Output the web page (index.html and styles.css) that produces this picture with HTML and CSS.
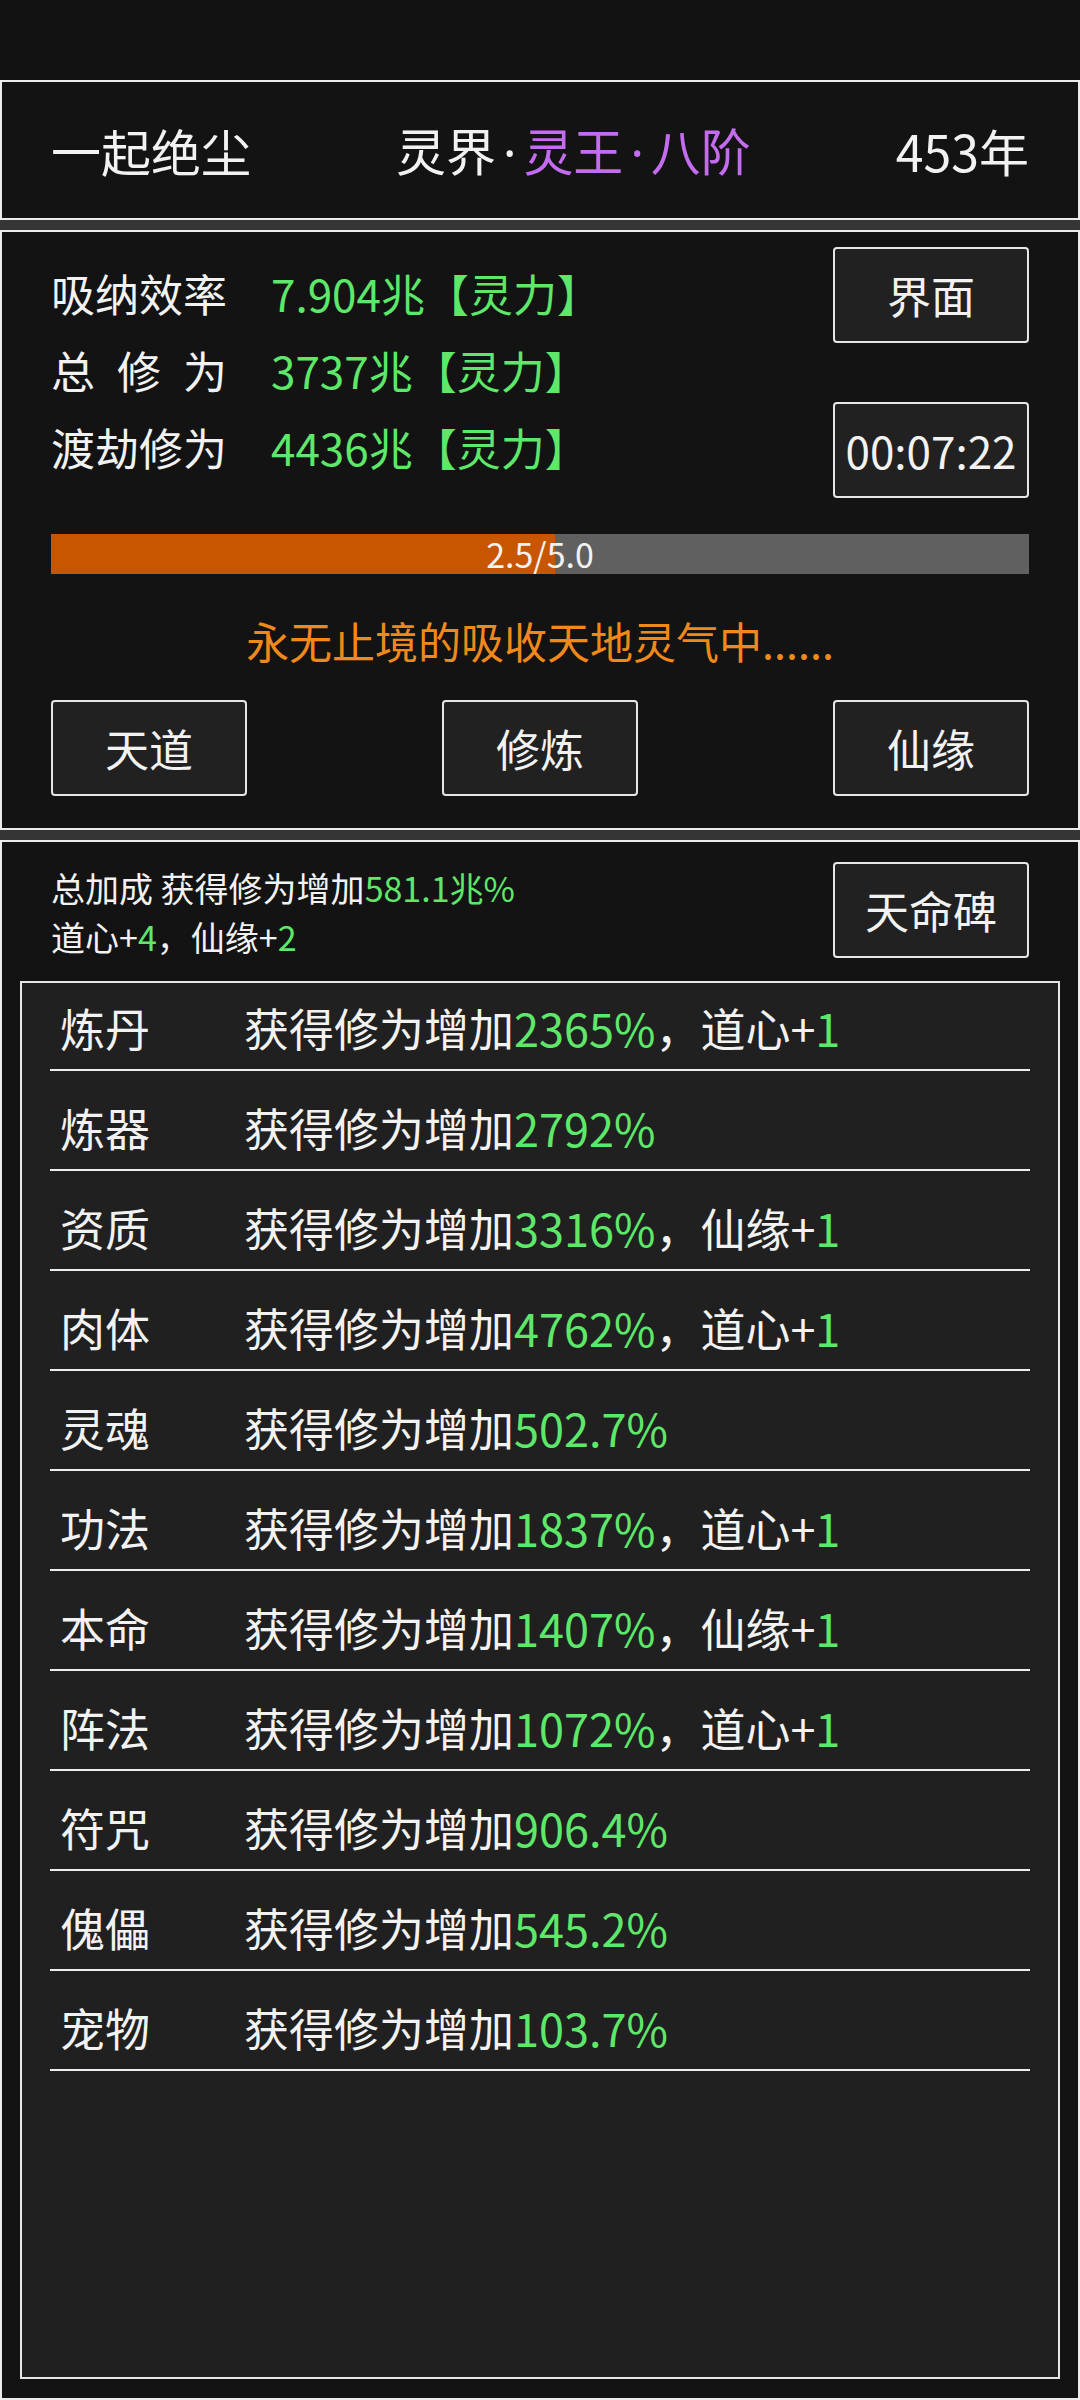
FILE: index.html
```html
<!DOCTYPE html>
<html lang="zh-CN">
<head>
<meta charset="utf-8">
<title>修仙</title>
<link rel="stylesheet" href="styles.css">
</head>
<body>
<div class="status"></div>

<section class="panel header">
  <div class="name">一起绝尘</div>
  <div class="realm">灵界<span class="dot">·</span><span class="purple">灵王<span class="dot">·</span>八阶</span></div>
  <div class="years">453年</div>
</section>

<section class="panel cultivate">
  <div class="info">
    <div class="stats">
      <div class="stat"><div class="stat-label">吸纳效率</div><div class="green">7.904兆【灵力】</div></div>
      <div class="stat"><div class="stat-label">总修为</div><div class="green">3737兆【灵力】</div></div>
      <div class="stat"><div class="stat-label">渡劫修为</div><div class="green">4436兆【灵力】</div></div>
    </div>
    <div class="side">
      <div class="btn">界面</div>
      <div class="btn">00:07:22</div>
    </div>
  </div>
  <div class="bar">
    <div class="bar-fill" style="width:51.5%"></div>
    <div class="bar-text">2.5/5.0</div>
  </div>
  <div class="hint">永无止境的吸收天地灵气中......</div>
  <div class="actions">
    <div class="btn">天道</div>
    <div class="btn">修炼</div>
    <div class="btn">仙缘</div>
  </div>
</section>

<section class="panel bonus-panel">
  <div class="bonus-top">
    <div class="bonus-text">
      <div>总加成 获得修为增加<span class="green">581.1兆%</span></div>
      <div>道心+<span class="green">4</span>，仙缘+<span class="green">2</span></div>
    </div>
    <div class="btn">天命碑</div>
  </div>
  <div class="list">
    <div class="row"><div class="row-label">炼丹</div><div>获得修为增加<span class="green">2365%</span>，道心+<span class="green">1</span></div></div>
    <div class="row"><div class="row-label">炼器</div><div>获得修为增加<span class="green">2792%</span></div></div>
    <div class="row"><div class="row-label">资质</div><div>获得修为增加<span class="green">3316%</span>，仙缘+<span class="green">1</span></div></div>
    <div class="row"><div class="row-label">肉体</div><div>获得修为增加<span class="green">4762%</span>，道心+<span class="green">1</span></div></div>
    <div class="row"><div class="row-label">灵魂</div><div>获得修为增加<span class="green">502.7%</span></div></div>
    <div class="row"><div class="row-label">功法</div><div>获得修为增加<span class="green">1837%</span>，道心+<span class="green">1</span></div></div>
    <div class="row"><div class="row-label">本命</div><div>获得修为增加<span class="green">1407%</span>，仙缘+<span class="green">1</span></div></div>
    <div class="row"><div class="row-label">阵法</div><div>获得修为增加<span class="green">1072%</span>，道心+<span class="green">1</span></div></div>
    <div class="row"><div class="row-label">符咒</div><div>获得修为增加<span class="green">906.4%</span></div></div>
    <div class="row"><div class="row-label">傀儡</div><div>获得修为增加<span class="green">545.2%</span></div></div>
    <div class="row"><div class="row-label">宠物</div><div>获得修为增加<span class="green">103.7%</span></div></div>
  </div>
</section>
</body>
</html>
```

FILE: styles.css
```css
* {
  box-sizing: border-box;
  margin: 0;
  padding: 0;
}

html {
  background: #353535;
}

body {
  margin: 0;
  width: 1080px;
  height: 2400px;
  display: flex;
  flex-direction: column;
  background: #353535;
  color: #f2f2f2;
  font-family: "Noto Sans CJK SC", "Noto Sans", sans-serif;
  overflow: hidden;
}

.status {
  height: 80px;
  flex: none;
  background: #121212;
}

.panel {
  flex: none;
  background: #131313;
  border: 2px solid #ececec;
}

.panel + .panel {
  margin-top: 10px;
}

.green {
  color: #5ee86a;
}

.purple {
  color: #c46cf0;
}

/* header */
.header {
  height: 140px;
  padding: 0 49px;
  display: flex;
  align-items: center;
  justify-content: space-between;
  font-size: 50px;
  line-height: 1;
  white-space: nowrap;
}

.dot {
  font-family: "Noto Sans", "DejaVu Sans", sans-serif;
  margin: 0 7px;
}

/* cultivation panel */
.cultivate {
  height: 600px;
  padding: 13px 49px 30px;
  display: flex;
  flex-direction: column;
}

.info {
  height: 251px;
  display: flex;
  align-items: center;
  justify-content: space-between;
}

.stats {
  display: flex;
  flex-direction: column;
  margin-top: -2px;
}

.stat {
  height: 77px;
  display: flex;
  align-items: center;
  font-size: 44px;
  white-space: nowrap;
}

.stat-label {
  width: 176px;
  margin-right: 44px;
  text-align: justify;
  text-align-last: justify;
}

.side {
  height: 251px;
  margin-top: 4px;
  display: flex;
  flex-direction: column;
  justify-content: space-between;
}

.btn {
  flex: none;
  width: 196px;
  height: 96px;
  border: 2px solid #e6e6e6;
  border-radius: 4px;
  background: #212121;
  display: flex;
  align-items: center;
  justify-content: center;
  font-size: 44px;
  white-space: nowrap;
}

.bar {
  position: relative;
  margin-top: 38px;
  height: 40px;
  background: #606060;
  flex: none;
}

.bar-fill {
  height: 100%;
  background: #c85500;
}

.bar-text {
  position: absolute;
  inset: 0;
  display: flex;
  align-items: center;
  justify-content: center;
  font-size: 34px;
  line-height: 1;
}

.hint {
  margin-top: 36px;
  height: 60px;
  line-height: 60px;
  text-align: center;
  color: #f0891a;
  font-size: 43px;
  white-space: nowrap;
}

.actions {
  margin-top: 30px;
  display: flex;
  justify-content: space-between;
}

/* bonus panel */
.bonus-panel {
  flex: 1;
  padding: 20px 18px 19px;
  display: flex;
  flex-direction: column;
}

.bonus-top {
  height: 96px;
  padding: 0 31px;
  display: flex;
  align-items: flex-start;
  justify-content: space-between;
}

.bonus-text {
  padding-top: 1px;
  font-size: 34px;
  line-height: 49px;
  white-space: nowrap;
}

.list {
  flex: 1;
  margin-top: 23px;
  padding: 0 28px;
  background: #202020;
  border: 2px solid #e6e6e6;
  display: flex;
  flex-direction: column;
  gap: 12px;
}

.row {
  flex: none;
  height: 88px;
  padding-top: 2px;
  border-bottom: 2px solid #eeeeee;
  display: flex;
  align-items: center;
  font-size: 45px;
  white-space: nowrap;
}

.row-label {
  width: 194px;
  padding-left: 10px;
}
```
